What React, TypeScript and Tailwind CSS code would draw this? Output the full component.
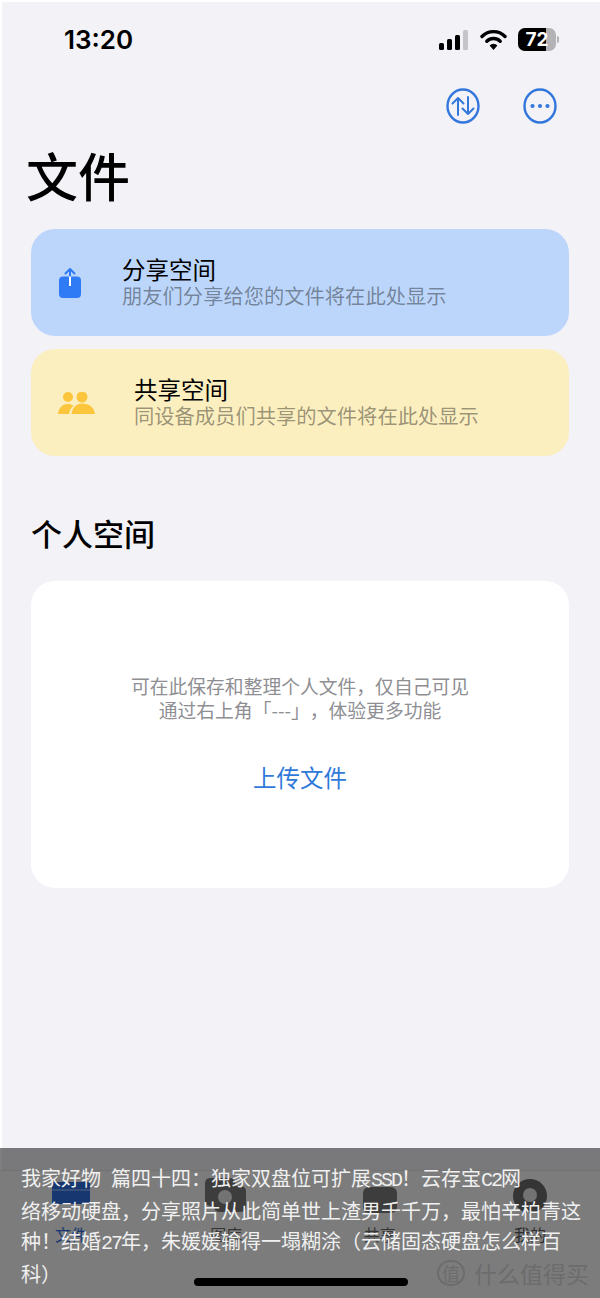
import React from "react";

const cjk = "font-['PingFang_SC','Noto_Sans_CJK_SC',sans-serif]";

function StatusBar() {
  return (
    <div className="h-[72px] flex items-center justify-between pl-[64px] pr-[41px] pt-[7px]">
      <span className="font-['Inter',sans-serif] text-[26px] font-semibold text-black leading-none">13:20</span>
      <div className="flex items-center gap-[11px]">
        <svg width="30" height="22" viewBox="0 0 30 22">
          <rect x="0" y="14" width="5" height="7" rx="1.5" fill="#000" />
          <rect x="8" y="10" width="5" height="11" rx="1.5" fill="#000" />
          <rect x="16" y="6" width="5" height="15" rx="1.5" fill="#000" />
          <rect x="24" y="1" width="5" height="20" rx="1.5" fill="#c4c4c8" />
        </svg>
        <svg width="27" height="22" viewBox="0 0 27 22" fill="none">
          <path d="M2 7.500 A16 16 0 0 1 25 7.500" stroke="#000" strokeWidth="3.400" strokeLinecap="round" />
          <path d="M6.800 12.200 A9.500 9.500 0 0 1 20.200 12.200" stroke="#000" strokeWidth="3.400" strokeLinecap="round" />
          <path d="M13.500 21 L9.600 16.400 A5.500 5.500 0 0 1 17.400 16.400 Z" fill="#000" />
        </svg>
        <div className="flex items-center">
          <div className="relative w-[38px] h-[23px] rounded-[7px] bg-[#b3b3b6] overflow-hidden">
            <div className="w-[28px] h-full bg-black" />
            <span className="absolute inset-0 flex items-center justify-center font-['Inter',sans-serif] text-[19px] font-bold text-white leading-none">72</span>
          </div>
          <div className="w-[2px] h-[7px] rounded-r bg-[#b3b3b6] ml-[1px]" />
        </div>
      </div>
    </div>
  );
}

function TopActions() {
  return (
    <div className="h-[68px] flex items-center justify-end gap-[43px] pr-[43px]">
      <svg width="34" height="36" viewBox="0 0 34 36" fill="none" stroke="#3377dd" strokeWidth="2.400" strokeLinecap="round" strokeLinejoin="round">
        <ellipse cx="17" cy="18" rx="15.500" ry="16.500" />
        <path d="M12 27V10M6.500 15.500 12 10l5.500 5.500" strokeWidth="2" />
        <path d="M22 9v17M16.500 20.500 22 26l5.500-5.500" strokeWidth="2" />
      </svg>
      <svg width="34" height="36" viewBox="0 0 34 36" fill="none">
        <ellipse cx="17" cy="18" rx="15.500" ry="16.500" stroke="#3377dd" strokeWidth="2.400" />
        <circle cx="9.500" cy="18" r="2.100" fill="#3377dd" />
        <circle cx="17" cy="18" r="2.100" fill="#3377dd" />
        <circle cx="24.500" cy="18" r="2.100" fill="#3377dd" />
      </svg>
    </div>
  );
}

function SpaceCard({ tone, icon, title, sub, left }: { tone: string; icon: React.ReactNode; title: string; sub: string; left: string }) {
  return (
    <div className={`h-[107px] rounded-[24px] flex items-center ${tone}`}>
      <div className={`flex justify-center shrink-0 ${left}`}>{icon}</div>
      <div className="flex flex-col pb-[2px]">
        <span className="text-[23.500px] leading-[28px] text-black">{title}</span>
        <span className="text-[20.300px] leading-[25px] text-[#000000]/40">{sub}</span>
      </div>
    </div>
  );
}

function ShareIcon() {
  return (
    <svg width="24" height="30" viewBox="0 0 24 30" fill="none">
      <rect x="1" y="8.500" width="22" height="21.500" rx="4" fill="#2f7af5" />
      <path d="M12 1.500v7" stroke="#2f7af5" strokeWidth="2" />
      <path d="M12 8.500v9.500" stroke="#ffffff" strokeWidth="2" />
      <path d="M7.500 5.500 12 1l4.500 4.500" stroke="#2f7af5" strokeWidth="2" strokeLinecap="round" strokeLinejoin="round" />
    </svg>
  );
}

function PeopleIcon() {
  return (
    <svg width="37" height="22" viewBox="0 0 37 22" fill="#fcc63c">
      <circle cx="10" cy="5" r="5" />
      <circle cx="24" cy="5" r="5.500" />
      <path d="M0 22C1 15 5 12 10 12C12 12 14 12.600 15.500 13.500C13 15.500 11.500 18.500 11 22Z" />
      <path d="M13.500 22C14.500 15 18.500 11.500 24.500 11.500C31 11.500 36 15.500 37 22Z" />
    </svg>
  );
}

function TabBar() {
  return (
    <div className="absolute left-0 right-0 bottom-0 h-[128px] bg-[#f9f9f9] border-t border-[#e4e4e4] flex justify-between pl-[52px] pr-[52px] pt-[7px]">
      <div className="flex flex-col items-center w-[38px]">
        <div className="w-[38px] h-[22px] mt-[4px] bg-[#2f6fe0] flex flex-col pt-[7px]">
          <div className="h-[2px] bg-[#6d9cf0]" />
        </div>
        <span className="text-[16px] leading-[20px] mt-[20px] text-[#2f6fe0]">文件</span>
      </div>
      <div className="flex flex-col items-center w-[42px]">
        <svg width="42" height="36" viewBox="0 0 42 36">
          <rect x="0" y="0" width="30" height="28" rx="5" fill="#7a7a7a" />
          <rect x="9" y="8" width="32" height="26" rx="5" fill="#7a7a7a" />
          <circle cx="20" cy="19" r="7" fill="#e6e6e6" />
        </svg>
        <span className="text-[16px] leading-[20px] mt-[10px] text-[#6b6b6b]">图库</span>
      </div>
      <div className="flex flex-col items-center w-[34px]">
        <div className="w-[34px] h-[26px] rounded-[6px] bg-[#7a7a7a] mt-[9px]" />
        <span className="text-[16px] leading-[20px] mt-[11px] text-[#6b6b6b]">共享</span>
      </div>
      <div className="flex flex-col items-center w-[36px]">
        <svg width="36" height="36" viewBox="0 0 36 36">
          <circle cx="18" cy="18" r="17" fill="#6b6b6b" />
          <circle cx="18" cy="17" r="7" fill="#e6e6e6" />
        </svg>
        <span className="text-[16px] leading-[20px] mt-[10px] text-[#5a5a5a]">我的</span>
      </div>
    </div>
  );
}

function Mono({ children }: { children: string }) {
  return <span className="font-['Liberation_Mono',monospace] tracking-[-2px]">{children}</span>;
}

function CaptionOverlay() {
  return (
    <div className="absolute left-0 right-0 bottom-0 h-[150px] bg-black/50 pt-[15px] pl-[21px] pr-[10px]">
      <p className={`${cjk} text-[20px] leading-[30px] text-[#f0f0f0] whitespace-nowrap [text-spacing-trim:space-all]`}>
        我家好物<span className="inline-block w-[10px]" />篇四十四：独家双盘位可扩展<Mono>SSD</Mono>！云存宝<Mono>C2</Mono>网
        <br />
        络移动硬盘，分享照片从此简单世上渣男千千万，最怕辛柏青这
        <br />
        种！结婚<Mono>27</Mono>年，朱媛媛输得一塌糊涂（云储固态硬盘怎么样百
        <br />
        科）
      </p>
      <div className="absolute left-[194px] bottom-[12px] w-[214px] h-[8px] rounded-full bg-black" />
      <div className="absolute right-[11px] bottom-[12px] flex items-center gap-[9px] text-[#6c6c6c]">
        <div className="w-[28px] h-[26px] rounded-full border-[2px] border-[#6c6c6c] flex items-center justify-center text-[18px] leading-none">值</div>
        <span className="text-[23px] leading-none">什么值得买</span>
      </div>
    </div>
  );
}

export default function App() {
  return (
    <div className={`relative w-[600px] h-[1298px] overflow-hidden bg-[#f2f2f7] shadow-[inset_2px_2px_0_#ffffff] ${cjk}`}>
      <StatusBar />
      <TopActions />
      <h1 className="text-[52px] leading-[60px] font-medium text-black pl-[26px] mt-[5px]">文件</h1>
      <div className="flex flex-col gap-[13px] px-[31px] mt-[24px]">
        <SpaceCard tone="bg-[#bcd6fb]" left="w-[91px] pr-[13px]" icon={<ShareIcon />} title="分享空间" sub="朋友们分享给您的文件将在此处显示" />
        <SpaceCard tone="bg-[#fbeebf]" left="w-[103px] pr-[12px]" icon={<PeopleIcon />} title="共享空间" sub="同设备成员们共享的文件将在此处显示" />
      </div>
      <h2 className="text-[31px] leading-[40px] font-medium text-black pl-[31px] mt-[57px]">个人空间</h2>
      <div className="mx-[31px] mt-[28px] h-[307px] rounded-[24px] bg-white flex flex-col items-center pt-[93px]">
        <p className="text-[18.800px] leading-[24px] text-[#8e8e93] text-center [text-spacing-trim:space-all]">
          可在此保存和整理个人文件，仅自己可见
          <br />
          通过右上角「---」，体验更多功能
        </p>
        <span className="text-[23.500px] leading-[30px] text-[#2f7ad9] mt-[40px]">上传文件</span>
      </div>
      <TabBar />
      <CaptionOverlay />
    </div>
  );
}
